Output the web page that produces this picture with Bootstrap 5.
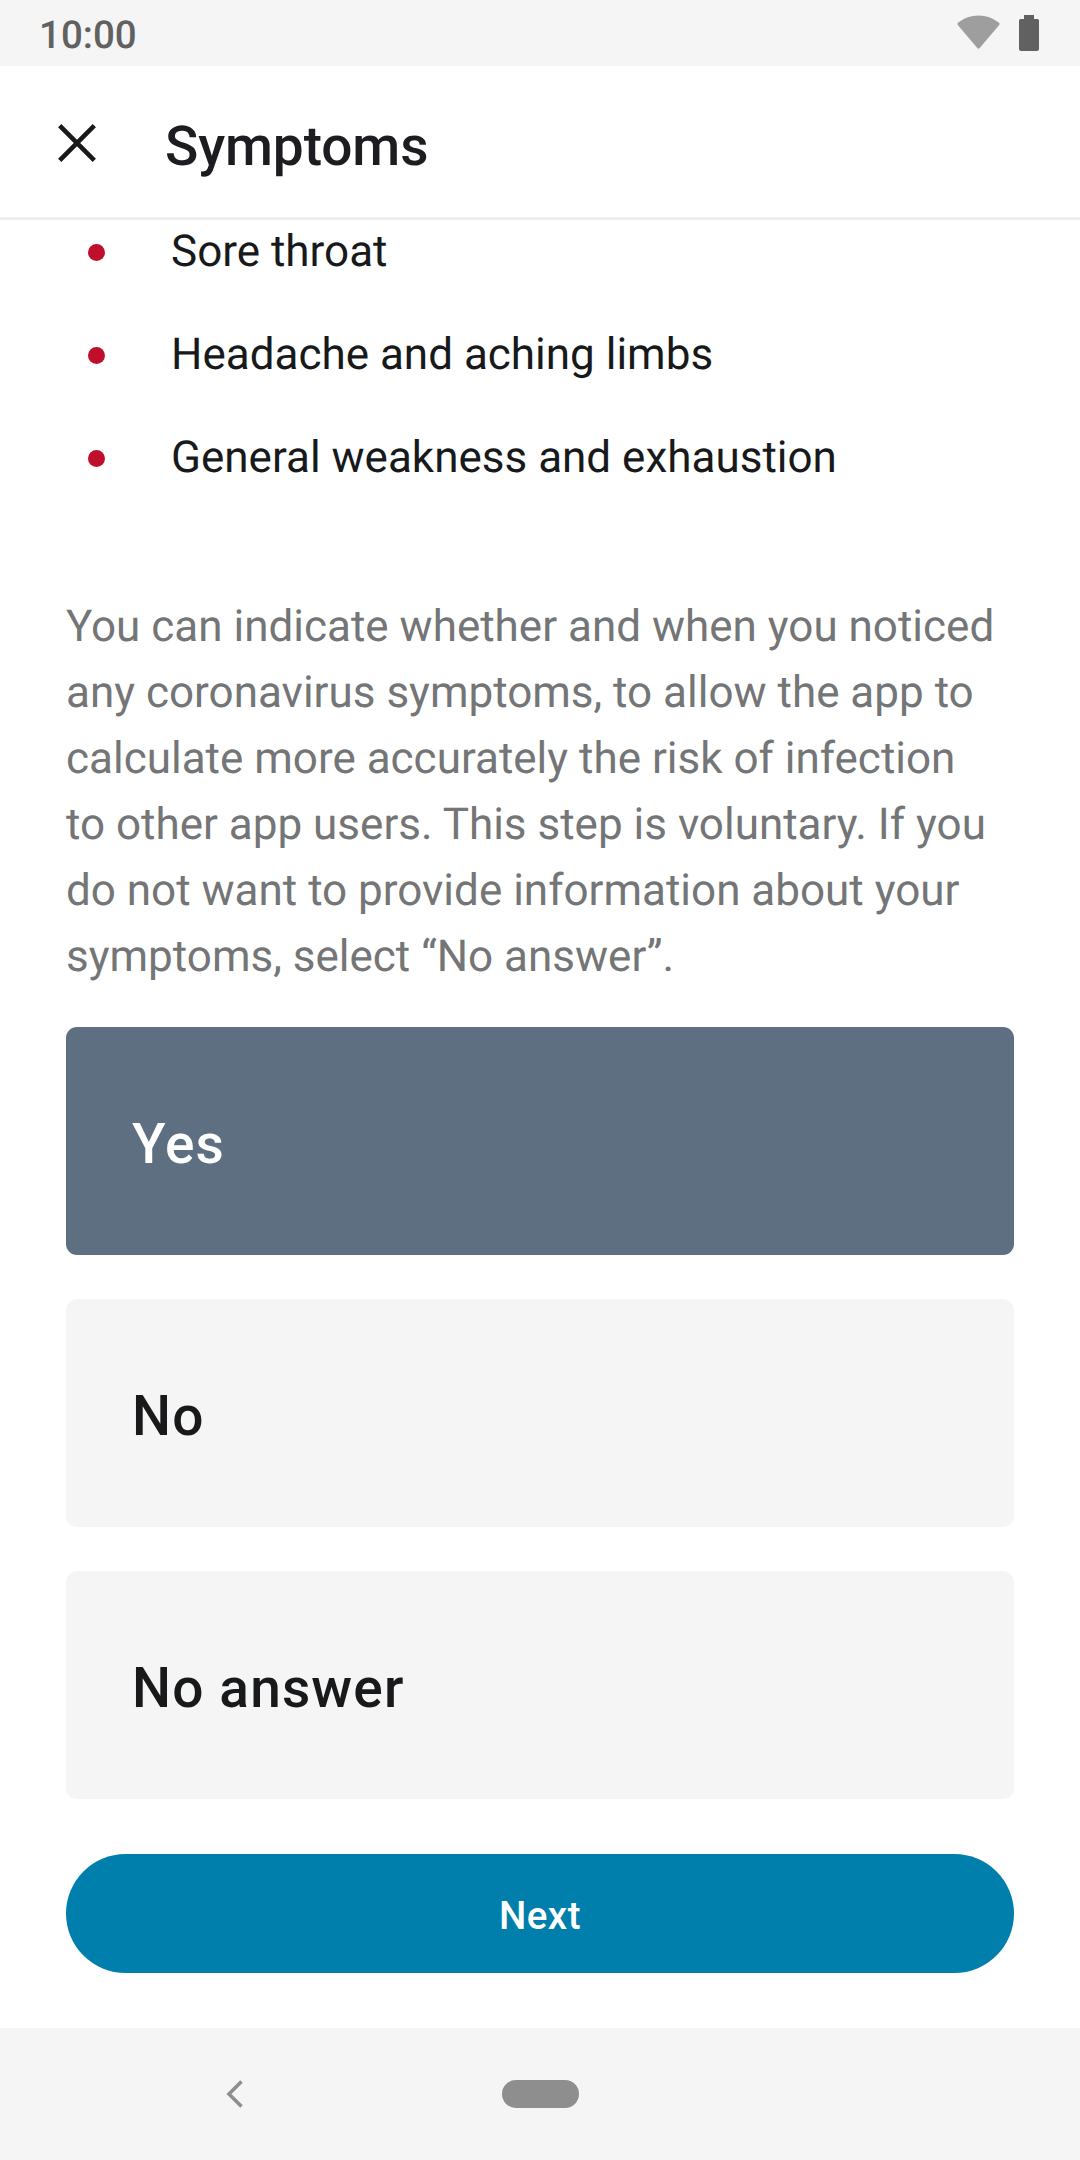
<!DOCTYPE html>
<html lang="en">
<head>
<meta charset="utf-8">
<meta name="viewport" content="width=device-width, initial-scale=1">
<title>Symptoms</title>
<link href="https://cdn.jsdelivr.net/npm/bootstrap@5.3.0/dist/css/bootstrap.min.css" rel="stylesheet">
<style>
  body { font-family: Roboto, "Noto Sans", sans-serif; color: #17191a; background: #fff; text-rendering: geometricPrecision; }
  .screen { height: 2160px; width: 1080px; }
  .status-bar { height: 66px; padding: 4px 41px 0 39px; background: #f5f5f5; color: #616161; font-size: 38.5px; font-weight: 500; }
  .clock { padding-top: 2px; }
  .status-icons { height: 62px; gap: 19px; padding-top: 11px; }
  .app-bar { height: 154px; padding: 0 58px; border-bottom: 3px solid #eee; }
  .close-btn { width: 38px; height: 38px; margin-top: 2px; }
  .app-title { font-size: 55px; font-weight: 500; line-height: 66px; padding-top: 11px; margin-left: 69px; color: #1c1c21; letter-spacing: -.1px; }
  .content { padding: 1px 66px 0; }
  .body-text { font-size: 44px; }
  .symptoms { gap: 43px; }
  .symptoms li { line-height: 60px; padding-left: 22px; gap: 66px; }
  .bullet { width: 17px; height: 17px; background: #c00f2d; margin-top: 3px; }
  .hint { margin: 106px 0 38px; line-height: 66px; color: #747576; white-space: nowrap; }
  .options { gap: 44px; }
  .option { height: 228px; padding: 6px 66px 0; border: 0; border-radius: 11px; font-size: 55px; font-weight: 500; letter-spacing: 1.15px; line-height: 66px; background: #f5f5f5; color: #17191a; }
  .option.selected { background: #5d6f80; color: #fff; }
  .next-btn { height: 119px; margin-top: 55px; padding: 5px 0 0; border: 0; font-size: 38.5px; font-weight: 500; letter-spacing: .5px; background: #007fad; color: #fff; }
  .system-nav { height: 132px; background: #f5f5f5; padding-left: 226px; }
  .home-pill { width: 77px; height: 28px; margin-left: 259px; background: #8e8e8e; }
</style>
</head>
<body>
<div class="screen d-flex flex-column overflow-hidden">
  <div class="status-bar d-flex justify-content-between align-items-center flex-shrink-0">
    <span class="clock">10:00</span>
    <div class="status-icons d-flex align-items-start">
      <svg width="43" height="35" viewBox="0 0 43 35" fill="#9e9e9e"><path d="M1 10.2Q-.2 8.6 1.2 7.5Q10 .4 21.5.4T41.800 7.500Q43.200 8.600 42 10.200L22.900 32.800Q21.500 34.500 20.100 32.800Z"/></svg>
      <svg width="20" height="36" viewBox="0 0 20 36" fill="#616161"><path d="M5 0H15V4H18.500Q20 4 20 5.500V34Q20 36 18 36H2Q0 36 0 34V5.500Q0 4 1.500 4H5Z"/></svg>
    </div>
  </div>

  <header class="app-bar d-flex align-items-center flex-shrink-0">
    <button type="button" class="close-btn btn p-0 border-0 d-flex" aria-label="Close">
      <svg width="38" height="38" viewBox="0 0 38 38" fill="none" stroke="#17191a" stroke-width="4.600"><path d="M1.700 1.700L36.300 36.300M36.300 1.700L1.700 36.300"/></svg>
    </button>
    <h1 class="app-title mb-0">Symptoms</h1>
  </header>

  <main class="content flex-grow-1 d-flex flex-column">
    <ul class="symptoms body-text list-unstyled d-flex flex-column mb-0">
      <li class="d-flex align-items-center"><span class="bullet rounded-circle"></span>Sore throat</li>
      <li class="d-flex align-items-center"><span class="bullet rounded-circle"></span>Headache and aching limbs</li>
      <li class="d-flex align-items-center"><span class="bullet rounded-circle"></span>General weakness and exhaustion</li>
    </ul>
    <p class="hint body-text">You can indicate whether and when you noticed<br>any coronavirus symptoms, to allow the app to<br>calculate more accurately the risk of infection<br>to other app users. This step is voluntary. If you<br>do not want to provide information about your<br>symptoms, select “No answer”.</p>
    <div class="options d-flex flex-column">
      <button type="button" class="option selected btn text-start">Yes</button>
      <button type="button" class="option btn text-start">No</button>
      <button type="button" class="option btn text-start">No answer</button>
    </div>
    <button type="button" class="next-btn btn rounded-pill w-100">Next</button>
  </main>

  <nav class="system-nav d-flex align-items-center flex-shrink-0">
    <svg width="17" height="28" viewBox="0 0 17 28" fill="none" stroke="#8e8e8e" stroke-width="3.600"><path d="M15.500 1.500L3 14L15.500 26.500"/></svg>
    <span class="home-pill rounded-pill"></span>
  </nav>
</div>
<script src="https://cdn.jsdelivr.net/npm/bootstrap@5.3.0/dist/js/bootstrap.bundle.min.js"></script>
</body>
</html>
